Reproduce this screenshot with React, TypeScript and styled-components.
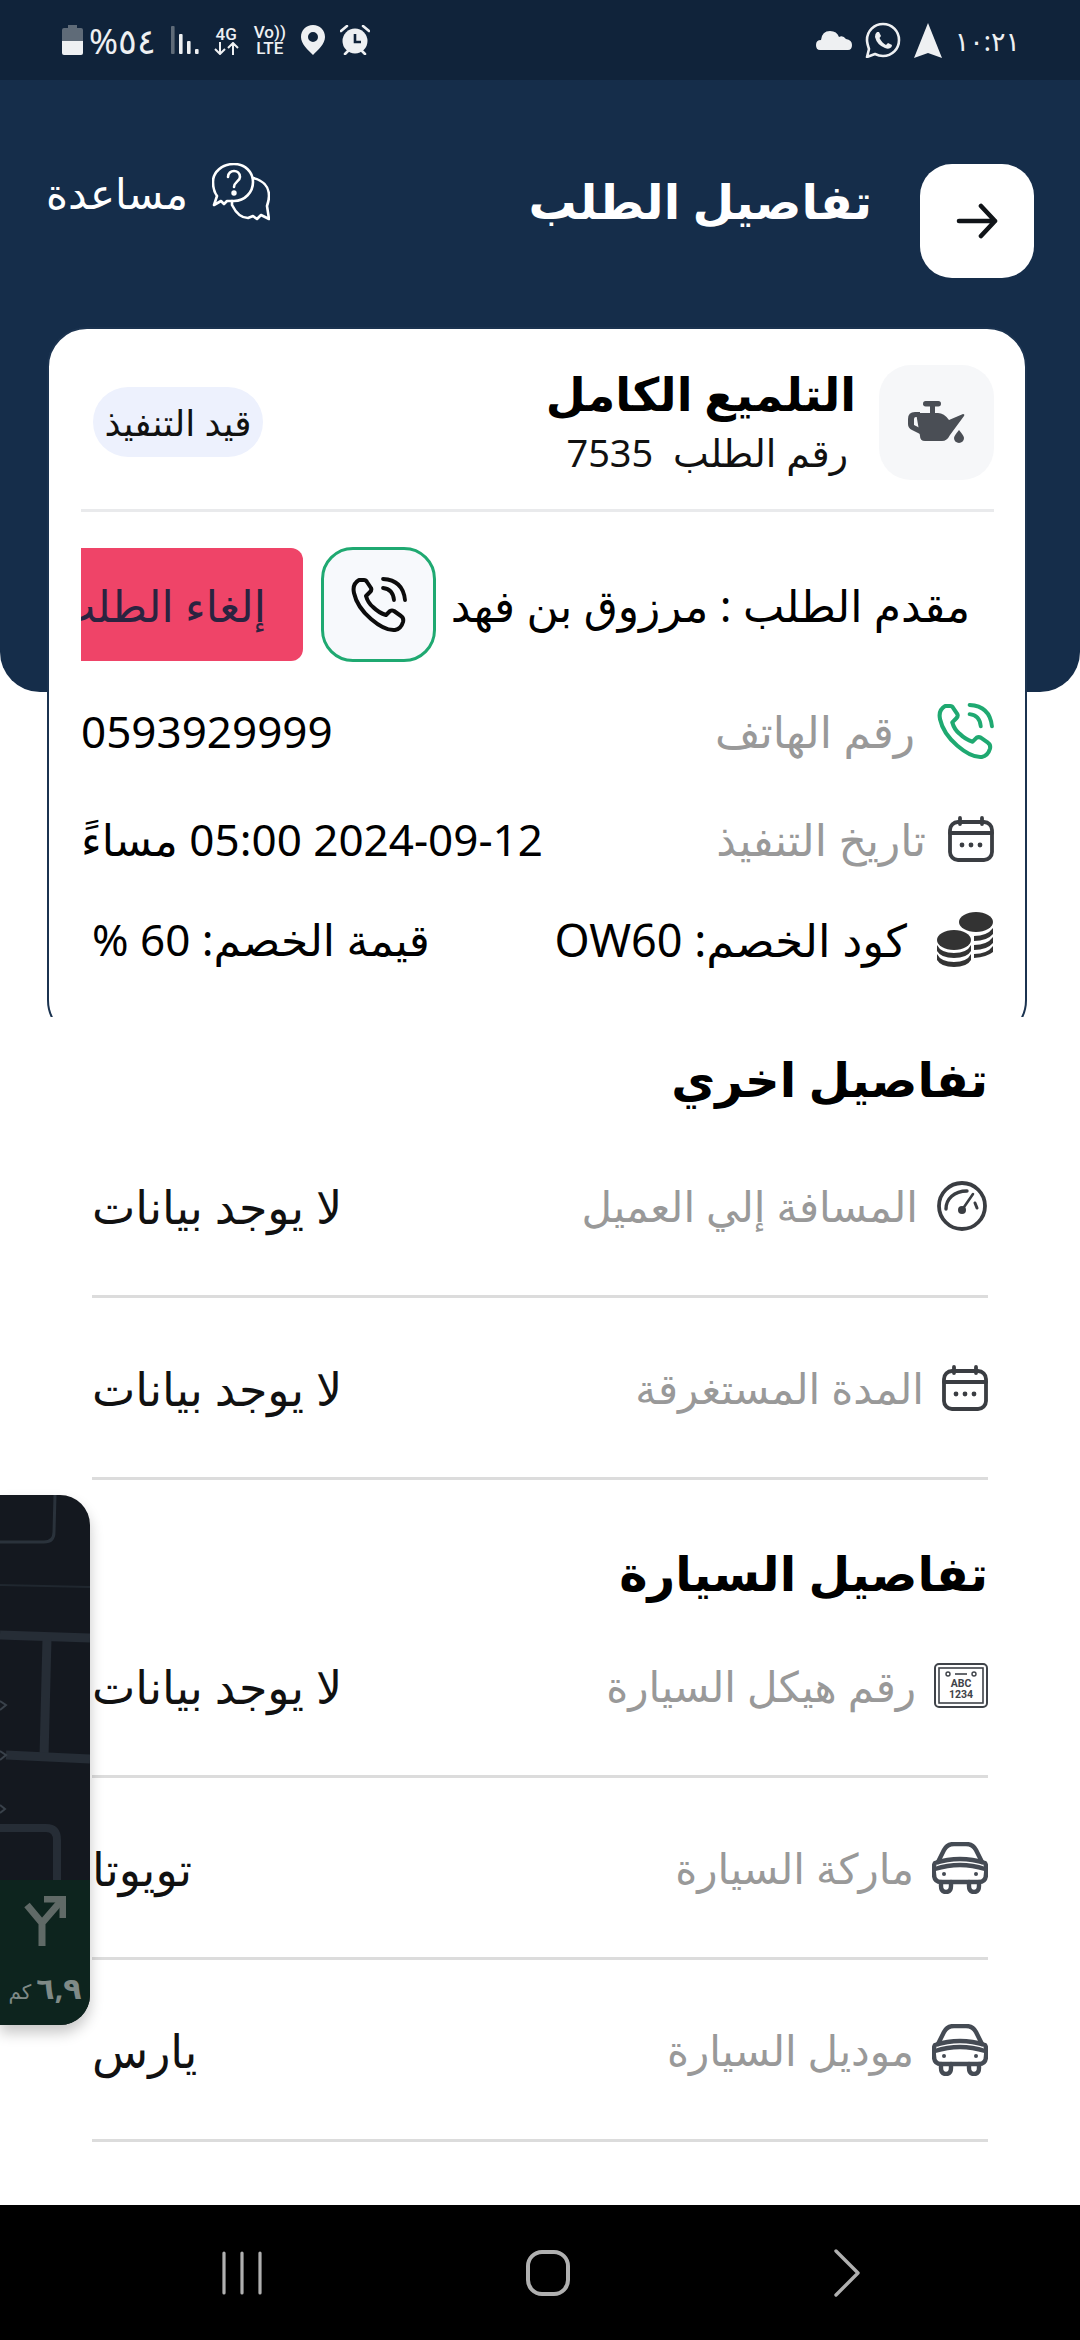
import React from 'react';
import styled, { createGlobalStyle } from 'styled-components';

const GlobalStyle = createGlobalStyle`
  html, body {
    margin: 0;
    padding: 0;
    background: #ffffff;
  }
  * {
    box-sizing: border-box;
  }
`;

const FONT = `"Noto Sans", "DejaVu Sans", sans-serif`;

const Screen = styled.div`
  position: relative;
  width: 1080px;
  height: 2340px;
  overflow: hidden;
  background: #ffffff;
  font-family: ${FONT};
  display: flex;
  flex-direction: column;
`;

const StatusBar = styled.div`
  direction: ltr;
  height: 80px;
  flex: none;
  background: #10233a;
  color: #eef0f2;
  display: flex;
  align-items: center;
  justify-content: space-between;
  padding: 0 60px 0 62px;
`;

const StatusGroup = styled.div`
  display: flex;
  align-items: center;
  gap: ${(p: { $gap: number }) => p.$gap}px;
`;

const StatusText = styled.span`
  font-size: ${(p: { $size: number }) => p.$size}px;
  line-height: 1;
  color: #eef0f2;
`;

const StackedLabel = styled.span`
  display: flex;
  flex-direction: column;
  align-items: center;
  font-family: "Roboto", sans-serif;
  font-weight: 500;
  font-size: 17px;
  line-height: 16px;
`;

const Header = styled.div`
  height: 612px;
  flex: none;
  background: #152d4a;
  border-radius: 0 0 40px 40px;
  padding: 83px 46px 0 46px;
`;

const HeaderRow = styled.div`
  display: flex;
  align-items: center;
`;

const BackButton = styled.div`
  width: 114px;
  height: 114px;
  border-radius: 32px;
  background: #ffffff;
  display: flex;
  align-items: center;
  justify-content: center;
`;

const PageTitle = styled.div`
  flex: 1;
  margin-right: 48px;
  margin-bottom: 42px;
  font-size: 48px;
  font-weight: 700;
  color: #ffffff;
`;

const HelpLink = styled.div`
  display: flex;
  align-items: center;
  gap: 24px;
  color: #ffffff;
  font-size: 42px;
  letter-spacing: 1px;
  margin-bottom: 58px;
`;

const CardClip = styled.div`
  flex: none;
  height: 690px;
  margin: -365px 53px 0 47px;
  overflow: hidden;
  position: relative;
`;

const Card = styled.div`
  height: 713px;
  background: #ffffff;
  border: 2px solid #1b3350;
  border-radius: 40px;
  padding: 34px 31px 0 32px;
`;

const CardTop = styled.div`
  display: flex;
  align-items: center;
  padding-bottom: 28px;
  border-bottom: 3px solid #e9eaec;
`;

const OilBox = styled.div`
  width: 115px;
  height: 115px;
  flex: none;
  border-radius: 32px;
  background: #f6f7f9;
  display: flex;
  align-items: center;
  justify-content: center;
`;

const TitleStack = styled.div`
  flex: 1;
  margin-right: 23px;
`;

const ServiceName = styled.div`
  font-size: 46px;
  font-weight: 700;
  line-height: 60px;
  color: #000000;
`;

const OrderNumber = styled.div`
  font-size: 38px;
  line-height: 58px;
  margin-right: 8px;
  color: #111111;
  white-space: pre;
`;

const StatusBadge = styled.div`
  width: 170px;
  height: 70px;
  border-radius: 35px;
  background: #edf1fd;
  color: #111111;
  font-size: 36px;
  white-space: nowrap;
  display: flex;
  align-items: center;
  justify-content: center;
  margin-left: 12px;
`;

const RequesterRow = styled.div`
  display: flex;
  align-items: center;
  margin-top: 35px;
  overflow: hidden;
`;

const RequesterName = styled.div`
  flex: none;
  width: 558px;
  padding-right: 24px;
  font-size: 44px;
  color: #000000;
  white-space: nowrap;
`;

const CallButton = styled.div`
  width: 115px;
  height: 115px;
  flex: none;
  border-radius: 32px;
  border: 3px solid #1fa971;
  background: #f7f9fc;
  display: flex;
  align-items: center;
  justify-content: center;
`;

const CancelButton = styled.div`
  flex: none;
  width: 320px;
  height: 113px;
  margin-right: 18px;
  padding-right: 37px;
  border-radius: 12px;
  background: #ef4468;
  color: #2b2340;
  font-size: 44px;
  white-space: nowrap;
  display: flex;
  align-items: center;
`;

const InfoRow = styled.div`
  display: flex;
  align-items: center;
  justify-content: space-between;
  height: ${(p: { $height: number }) => p.$height}px;
`;

const InfoLabel = styled.div`
  display: flex;
  align-items: center;
  gap: ${(p: { $gap: number }) => p.$gap}px;
  font-size: 44px;
  color: #999999;
  white-space: nowrap;
`;

const InfoValue = styled.div`
  font-size: 44px;
  color: #000000;
  white-space: nowrap;
  margin-left: ${(p: { $inset?: number }) => p.$inset || 0}px;
`;

const CouponText = styled.span`
  color: #000000;
  font-size: 45px;
`;

const Details = styled.div`
  padding: 0 92px;
`;

const SectionTitle = styled.div<{ $height: number; $top: number }>`
  font-size: 48px;
  font-weight: 700;
  color: #000000;
  height: ${(p) => p.$height}px;
  padding-top: ${(p) => p.$top}px;
  display: flex;
  align-items: center;
`;

const DetailRow = styled.div`
  height: 182px;
  border-bottom: 3px solid #dcdcdc;
  display: flex;
  align-items: center;
  justify-content: space-between;
`;

const DetailLabel = styled.div`
  display: flex;
  align-items: center;
  gap: 18px;
  font-size: 42px;
  color: #999999;
  white-space: nowrap;
`;

const DetailValue = styled.div`
  font-size: 46px;
  color: #111111;
  white-space: nowrap;
`;

const NavBar = styled.div`
  position: absolute;
  left: 0;
  right: 0;
  bottom: 0;
  height: 135px;
  background: #000000;
`;

const NavInner = styled.div`
  direction: ltr;
  height: 100%;
  display: flex;
  align-items: center;
  justify-content: space-between;
  padding: 0 220px 0 222px;
`;

const FloatingWindow = styled.div`
  direction: ltr;
  position: absolute;
  left: 0;
  top: 1495px;
  width: 90px;
  height: 530px;
  border-radius: 0 30px 30px 0;
  overflow: hidden;
  background: #14181f;
  box-shadow: 0 8px 14px rgba(0, 0, 0, 0.22);
  display: flex;
  flex-direction: column;
`;

const MapArea = styled.div`
  height: 385px;
  flex: none;
`;

const RouteHint = styled.div`
  flex: 1;
  background: #0d241e;
  padding-top: 16px;
  display: flex;
  flex-direction: column;
  align-items: center;
`;

const RouteDistance = styled.div`
  direction: rtl;
  color: #7f8a87;
  font-size: 30px;
  line-height: 36px;
  font-weight: 700;
  white-space: nowrap;
  margin-top: 24px;
`;

const RouteUnit = styled.span`
  font-size: 20px;
  font-weight: 400;
  margin-right: 5px;
`;

const PhoneIcon = ({ color, size }: { color: string; size: number }) => (
  <svg width={size} height={size} viewBox="0 0 56 56" fill="none" stroke={color} strokeWidth="4" strokeLinecap="round" strokeLinejoin="round">
    <path d="M8 3 L13 3 Q15 3 16 5 L20 11 Q21 13 19 15 L15 19 Q17 26 22 30 Q28 36 35 38 L39 34 Q41 33 43 34 L50 39 Q53 41 52 45 Q50 52 44 53 Q34 54 20 42 Q6 30 3 16 Q1 7 8 3 Z" />
    <path d="M32 11 Q42 12 43 23" strokeWidth="3.8" />
    <path d="M32 2 Q52 3 54 23" strokeWidth="3.8" />
  </svg>
);

const CalendarIcon = ({ size }: { size: number }) => (
  <svg width={size} height={size} viewBox="0 0 46 46" fill="none" stroke="#3a3d42" strokeWidth="3.8" strokeLinecap="round">
    <rect x="2" y="6" width="42" height="38" rx="8" />
    <path d="M12 2 V8 M34 2 V8 M2 17 H44" />
    <circle cx="14" cy="29" r="2.4" fill="#3a3d42" stroke="none" />
    <circle cx="23" cy="29" r="2.4" fill="#3a3d42" stroke="none" />
    <circle cx="32" cy="29" r="2.4" fill="#3a3d42" stroke="none" />
  </svg>
);

const CoinsIcon = () => (
  <svg width="57" height="57" viewBox="0 0 57 57" fill="#333333">
    <ellipse cx="39" cy="11" rx="17" ry="10" />
    <path d="M37 25 Q50 25 56 17 V23 Q50 30 37 30 Z" />
    <path d="M37 34 Q50 34 56 26 V32 Q50 39 37 39 Z" />
    <path d="M37 43 Q50 43 56 35 V41 Q50 46 37 47 Z" />
    <ellipse cx="17" cy="29" rx="17" ry="10" />
    <path d="M0 34 Q4 42 17 42 Q30 42 34 34 V40 Q30 47 17 47 Q4 47 0 40 Z" />
    <path d="M0 43 Q4 51 17 51 Q30 51 34 43 V49 Q30 56 17 56 Q4 56 0 49 Z" />
  </svg>
);

const GaugeIcon = () => (
  <svg width="52" height="52" viewBox="0 0 52 52" fill="none" stroke="#3a3d42" strokeWidth="3.8" strokeLinecap="round">
    <circle cx="26" cy="26" r="23" />
    <path d="M10 29 C10 19 18 11 31 11" strokeWidth="3.4" />
    <path d="M26 30 L37 14" strokeWidth="2.6" />
    <path d="M39 23 L41 28" strokeWidth="3" />
    <circle cx="26" cy="30" r="4" fill="#3a3d42" stroke="none" />
  </svg>
);

const PlateIcon = () => (
  <svg width="54" height="45" viewBox="0 0 54 45" fill="none" stroke="#3f4349">
    <rect x="1" y="1" width="52" height="43" rx="4" strokeWidth="2" />
    <rect x="5" y="5" width="44" height="35" strokeWidth="1.6" />
    <circle cx="14" cy="11" r="2" strokeWidth="1.4" />
    <circle cx="40" cy="11" r="2" strokeWidth="1.4" />
    <path d="M21 11 H33" strokeWidth="1.6" />
    <text x="27" y="24" textAnchor="middle" fontSize="10.5" fontWeight="700" fontFamily="Roboto, sans-serif" fill="#3f4349" stroke="none">ABC</text>
    <text x="27" y="35" textAnchor="middle" fontSize="10.5" fontWeight="700" fontFamily="Roboto, sans-serif" fill="#3f4349" stroke="none">1234</text>
  </svg>
);

const CarIcon = () => (
  <svg width="56" height="52" viewBox="0 0 56 52" fill="none" stroke="#454b54" strokeWidth="4.4" strokeLinecap="round" strokeLinejoin="round">
    <path d="M6 20 L12 8 Q15 2 22 2 H34 Q41 2 44 8 L50 20" />
    <path d="M3 21 Q1 24 2 32 Q2 40 9 40 H47 Q54 40 54 32 Q55 24 53 21 Q28 13 3 21 Z" />
    <path d="M3 27 Q28 19 53 27" />
    <path d="M9 40 V44 Q9 50 14 50 Q19 50 19 44 V40 M37 40 V44 Q37 50 42 50 Q47 50 47 44 V40" />
    <circle cx="12" cy="32" r="2" fill="#454b54" stroke="none" />
    <circle cx="44" cy="32" r="2" fill="#454b54" stroke="none" />
  </svg>
);

const OilCanIcon = () => (
  <svg width="58" height="42" viewBox="0 0 58 42" fill="#4a4e55">
    <rect x="15" y="0" width="18" height="5.5" rx="2.7" />
    <rect x="22" y="4" width="5" height="10" />
    <path d="M8 12 H30 Q36 12 41 19 L55 13 Q57 13 56 15 L42 34 Q39 40 34 40 H17 Q12 40 12 35 Z" />
    <path d="M7 11 Q0 11 0 18 V23 Q0 27 4 29 L12 33 V27 L6 24 V18 Q6 16 8 16 H12 V11 Z" />
    <path d="M51 29 Q56 35 56 37 A5 5 0 0 1 46 37 Q46 35 51 29 Z" />
  </svg>
);

const HelpIcon = () => (
  <svg width="58" height="58" viewBox="0 0 58 58" fill="none" stroke="#ffffff" strokeWidth="2.6" strokeLinejoin="round" strokeLinecap="round">
    <path d="M22 1 C33 1 41 9 41 19 C41 29 33 38 22 38 L15 38 L12 41 L9 38 L2 42 L5 33 C2 29 1 24 1 19 C1 9 10 1 22 1 Z" />
    <path d="M41 15 C50 17 57 23 57 33 C57 37 56 40 55 43 L57 56 L49 52 L45 56 L41 53 L36 55 C30 55 24 50 20 42 L20 38" />
    <path d="M16 14 C16 10 19 8 22 8 C25 8 28 10 28 14 C28 18 22 19 22 24" />
    <circle cx="22" cy="30" r="1.4" fill="#ffffff" />
  </svg>
);

const BackArrow = () => (
  <svg width="42" height="36" viewBox="0 0 42 36" fill="none" stroke="#101418" strokeWidth="4.6" strokeLinecap="round" strokeLinejoin="round">
    <path d="M3 18 H39 M25 3 L39 18 L25 33" />
  </svg>
);

const BatteryIcon = () => (
  <svg width="21" height="30" viewBox="0 0 21 30">
    <path d="M6 0 H15 V3 H19 Q21 3 21 5 V16 H0 V5 Q0 3 2 3 H6 Z" fill="#5f6b78" />
    <path d="M0 16 H21 V28 Q21 30 19 30 H2 Q0 30 0 28 Z" fill="#eef0f2" />
  </svg>
);

const SignalIcon = () => (
  <svg width="28" height="30" viewBox="0 0 28 30">
    <rect x="0" y="1" width="3.6" height="28" rx="1" fill="#5f6b78" />
    <rect x="8" y="9" width="3.6" height="20" rx="1" fill="#eef0f2" />
    <rect x="16" y="16" width="3.6" height="13" rx="1" fill="#eef0f2" />
    <rect x="24" y="24" width="3.6" height="5" rx="1" fill="#eef0f2" />
  </svg>
);

const ArrowsIcon = () => (
  <svg width="25" height="13" viewBox="0 0 25 13" fill="none" stroke="#eef0f2" strokeWidth="2">
    <path d="M6 0 V12 M1 7 L6 12 L11 7 M19 13 V1 M14 6 L19 1 L24 6" />
  </svg>
);

const PinIcon = () => (
  <svg width="24" height="30" viewBox="0 0 24 30">
    <path fillRule="evenodd" fill="#eef0f2" d="M12 0 C19 0 24 5 24 12 C24 19 17 25 12 30 C7 25 0 19 0 12 C0 5 5 0 12 0 Z M12 7 A5 5 0 1 0 12 17 A5 5 0 1 0 12 7 Z" />
  </svg>
);

const AlarmIcon = () => (
  <svg width="30" height="30" viewBox="0 0 30 30">
    <circle cx="15" cy="16" r="12.5" fill="#eef0f2" />
    <path d="M15 9 V17 H21" fill="none" stroke="#10233a" strokeWidth="2.6" />
    <path d="M1 6 L7 1 M29 6 L23 1" stroke="#eef0f2" strokeWidth="2.6" strokeLinecap="round" />
    <path d="M5 29 L8 26 M25 29 L22 26" stroke="#eef0f2" strokeWidth="2.6" strokeLinecap="round" />
  </svg>
);

const CloudIcon = () => (
  <svg width="36" height="20" viewBox="0 0 36 20">
    <path fill="#eef0f2" d="M4 20 Q0 20 0 15 Q0 10 5 10 Q6 1 14 1 Q21 1 23 7 Q27 5 30 9 Q36 10 36 15 Q36 20 32 20 Z" />
  </svg>
);

const WhatsappIcon = () => (
  <svg width="36" height="36" viewBox="0 0 36 36" fill="none">
    <path d="M18 2 C27 2 34 9 34 18 C34 27 27 34 18 34 C15 34 12 33 10 32 L2 35 L4 27 C3 24 2 21 2 18 C2 9 9 2 18 2 Z" stroke="#eef0f2" strokeWidth="2.6" strokeLinejoin="round" />
    <path d="M12 10 L14 10 L16 14 L14.5 16 Q17 21 21 23 L23 21 L27 23 L26.5 25 Q24 28 20 26 Q12 23 10 15 Q9.5 12 12 10 Z" fill="#eef0f2" />
  </svg>
);

const NavArrowIcon = () => (
  <svg width="28" height="35" viewBox="0 0 28 35">
    <path fill="#eef0f2" d="M14 0 L28 35 L14 30 L0 35 Z" />
  </svg>
);

const MapLines = () => (
  <svg width="90" height="385" viewBox="0 0 90 385" fill="none">
    <path d="M55 0 L54 37 Q54 47 44 47 L0 47" stroke="#2a323b" strokeWidth="3" />
    <path d="M0 90 L90 92" stroke="#20272f" strokeWidth="2" />
    <path d="M0 140 L90 143" stroke="#262d36" strokeWidth="9" />
    <path d="M47 143 L44 262" stroke="#262d36" strokeWidth="9" />
    <path d="M6 260 L90 264" stroke="#262d36" strokeWidth="9" />
    <path d="M0 333 L46 333 Q57 333 57 345 L57 385" stroke="#262d36" strokeWidth="8" />
    <path d="M0 206 L6 210 L0 215 M0 256 L6 260 L0 265 M0 310 L5 314 L0 318" stroke="#39414a" strokeWidth="2" />
  </svg>
);

const TurnIcon = () => (
  <svg width="42" height="50" viewBox="0 0 42 50" fill="none" stroke="#606a67" strokeWidth="7">
    <path d="M18 50 V27 L3 9 M18 27 L37 5" />
    <path d="M20 3 H39 V22" />
  </svg>
);

const RecentsIcon = () => (
  <svg width="40" height="44" viewBox="0 0 40 44" stroke="#b0b0b0" strokeWidth="3.2" strokeLinecap="round">
    <path d="M2 2 V42 M20 2 V42 M38 2 V42" />
  </svg>
);

const HomeIcon = () => (
  <svg width="44" height="46" viewBox="0 0 44 46" fill="none" stroke="#b0b0b0" strokeWidth="4">
    <rect x="2" y="2" width="40" height="42" rx="14" />
  </svg>
);

const ForwardIcon = () => (
  <svg width="26" height="48" viewBox="0 0 26 48" fill="none" stroke="#b0b0b0" strokeWidth="3.4" strokeLinecap="round" strokeLinejoin="round">
    <path d="M2 2 L24 24 L2 46" />
  </svg>
);

const firstDetails = [
  { icon: <GaugeIcon />, label: 'المسافة إلي العميل', value: 'لا يوجد بيانات' },
  { icon: <CalendarIcon size={46} />, label: 'المدة المستغرقة', value: 'لا يوجد بيانات' },
];

const carDetails = [
  { icon: <PlateIcon />, label: 'رقم هيكل السيارة', value: 'لا يوجد بيانات' },
  { icon: <CarIcon />, label: 'ماركة السيارة', value: 'تويوتا' },
  { icon: <CarIcon />, label: 'موديل السيارة', value: 'يارس' },
];

export default function App() {
  return (
    <Screen dir="rtl">
      <GlobalStyle />
      <StatusBar>
        <StatusGroup $gap={15}>
          <StatusGroup $gap={6}>
            <BatteryIcon />
            <StatusText $size={35}>%٥٤</StatusText>
          </StatusGroup>
          <SignalIcon />
          <StackedLabel>
            <span>4G</span>
            <ArrowsIcon />
          </StackedLabel>
          <StackedLabel>
            <span>Vo))</span>
            <span>LTE</span>
          </StackedLabel>
          <PinIcon />
          <AlarmIcon />
        </StatusGroup>
        <StatusGroup $gap={13}>
          <CloudIcon />
          <WhatsappIcon />
          <NavArrowIcon />
          <StatusText $size={27}>١٠:٢١</StatusText>
        </StatusGroup>
      </StatusBar>

      <Header>
        <HeaderRow>
          <BackButton>
            <BackArrow />
          </BackButton>
          <PageTitle>تفاصيل الطلب</PageTitle>
          <HelpLink>
            <HelpIcon />
            <span>مساعدة</span>
          </HelpLink>
        </HeaderRow>
      </Header>

      <CardClip>
        <Card>
          <CardTop>
            <OilBox>
              <OilCanIcon />
            </OilBox>
            <TitleStack>
              <ServiceName>التلميع الكامل</ServiceName>
              <OrderNumber>رقم الطلب  7535</OrderNumber>
            </TitleStack>
            <StatusBadge>قيد التنفيذ</StatusBadge>
          </CardTop>
          <RequesterRow>
            <RequesterName>مقدم الطلب : مرزوق بن فهد</RequesterName>
            <CallButton>
              <PhoneIcon color="#0c0c0c" size={56} />
            </CallButton>
            <CancelButton>إلغاء الطلب</CancelButton>
          </RequesterRow>
          <InfoRow $height={138}>
            <InfoLabel $gap={22}>
              <PhoneIcon color="#1fa971" size={57} />
              <span>رقم الهاتف</span>
            </InfoLabel>
            <InfoValue>0593929999</InfoValue>
          </InfoRow>
          <InfoRow $height={78}>
            <InfoLabel $gap={22}>
              <CalendarIcon size={46} />
              <span>تاريخ التنفيذ</span>
            </InfoLabel>
            <InfoValue>2024-09-12 05:00 مساءً</InfoValue>
          </InfoRow>
          <InfoRow $height={122}>
            <InfoLabel $gap={30}>
              <CoinsIcon />
              <CouponText>كود الخصم: OW60</CouponText>
            </InfoLabel>
            <InfoValue $inset={11}>قيمة الخصم: 60 %</InfoValue>
          </InfoRow>
        </Card>
      </CardClip>

      <Details>
        <SectionTitle $height={99} $top={24}>تفاصيل اخري</SectionTitle>
        {firstDetails.map((row) => (
          <DetailRow key={row.label}>
            <DetailLabel>
              {row.icon}
              <span>{row.label}</span>
            </DetailLabel>
            <DetailValue>{row.value}</DetailValue>
          </DetailRow>
        ))}
        <SectionTitle $height={116} $top={68}>تفاصيل السيارة</SectionTitle>
        {carDetails.map((row) => (
          <DetailRow key={row.label}>
            <DetailLabel>
              {row.icon}
              <span>{row.label}</span>
            </DetailLabel>
            <DetailValue>{row.value}</DetailValue>
          </DetailRow>
        ))}
      </Details>

      <FloatingWindow>
        <MapArea>
          <MapLines />
        </MapArea>
        <RouteHint>
          <TurnIcon />
          <RouteDistance>
            ٦,٩<RouteUnit>كم</RouteUnit>
          </RouteDistance>
        </RouteHint>
      </FloatingWindow>

      <NavBar>
        <NavInner>
          <RecentsIcon />
          <HomeIcon />
          <ForwardIcon />
        </NavInner>
      </NavBar>
    </Screen>
  );
}
